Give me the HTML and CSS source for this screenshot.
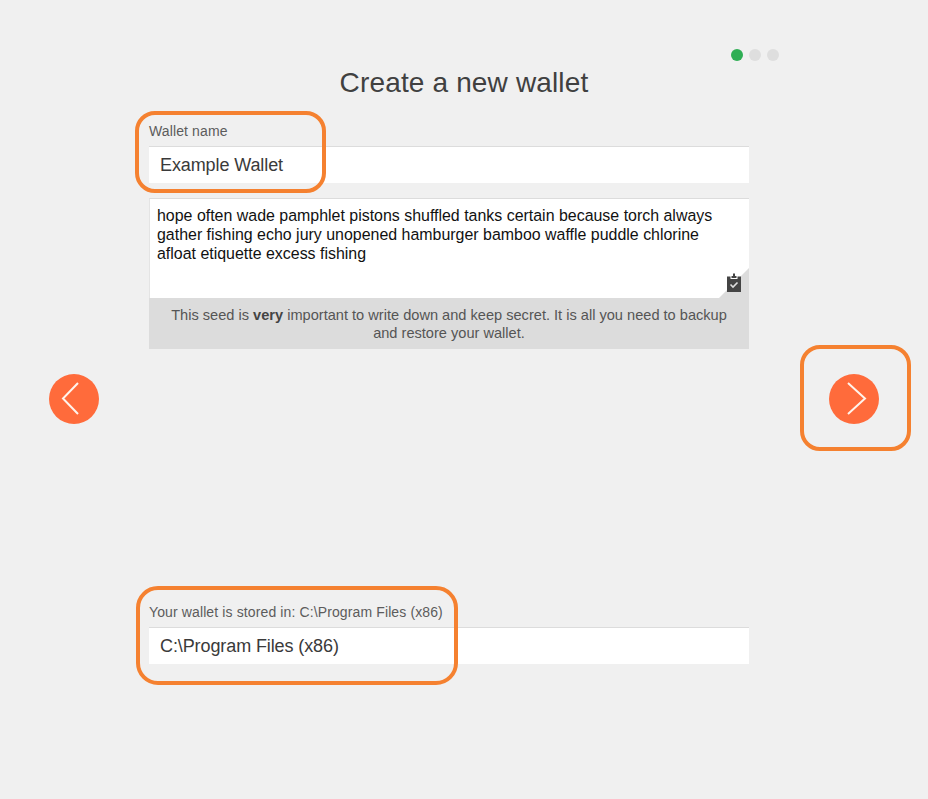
FILE: index.html
```html
<!DOCTYPE html>
<html lang="en">
<head>
<meta charset="utf-8">
<title>Create a new wallet</title>
<link rel="stylesheet" href="styles.css">
</head>
<body>
<main class="page">
  <div class="dots">
    <span class="dot dot-active"></span>
    <span class="dot"></span>
    <span class="dot"></span>
  </div>
  <h1 class="title">Create a new wallet</h1>
  <div class="form">
    <section class="field">
      <label class="label">Wallet name</label>
      <div class="input">Example Wallet</div>
    </section>
    <section class="seed">
      <div class="seed-box">
        <p class="seed-text">hope often wade pamphlet pistons shuffled tanks certain because torch always gather fishing echo jury unopened hamburger bamboo waffle puddle chlorine afloat etiquette excess fishing</p>
        <span class="fold"></span>
        <svg class="clip" width="14" height="19" viewBox="0 0 14 19" aria-hidden="true">
          <path fill="#444" d="M0 3.500h3.500V6h7V3.500H14V19H0zM4.500 3h1.500V0.500h2V3h1.500v2h-5z"/>
          <path fill="none" stroke="#dedede" stroke-width="1.600" d="M3.500 11.500l2.500 2.500 4.500-4.500"/>
        </svg>
      </div>
      <p class="notice">This seed is <strong>very</strong> important to write down and keep secret. It is all you need to backup and restore your wallet.</p>
    </section>
    <section class="field field-path">
      <label class="label">Your wallet is stored in: C:\Program Files (x86)</label>
      <div class="input">C:\Program Files (x86)</div>
    </section>
  </div>

  <button class="nav nav-prev" aria-label="Back">
    <svg width="50" height="50" viewBox="0 0 50 50"><path d="M29 9L14 24.500 29 40" fill="none" stroke="#fff4ec" stroke-width="2"/></svg>
  </button>
  <button class="nav nav-next" aria-label="Next">
    <svg width="50" height="50" viewBox="0 0 50 50"><path d="M19 9L36 24.500 19 40" fill="none" stroke="#fff4ec" stroke-width="2"/></svg>
  </button>

  <span class="mark mark-name"></span>
  <span class="mark mark-next"></span>
  <span class="mark mark-path"></span>
</main>
</body>
</html>
```

FILE: styles.css
```css
* {
  box-sizing: border-box;
}

html,
body {
  margin: 0;
  height: 100%;
}

body {
  background: #f0f0f0;
  font-family: "Liberation Sans", Arial, sans-serif;
  overflow: hidden;
}

.page {
  position: relative;
  height: 799px;
  padding-top: 49px;
}

.dots {
  display: flex;
  justify-content: flex-end;
  gap: 6px;
  height: 12px;
  padding-right: 149px;
}

.dot {
  width: 12px;
  height: 12px;
  border-radius: 50%;
  background: #dedede;
}

.dot-active {
  background: #2fae54;
}

.title {
  margin: 5px 0 0;
  height: 33px;
  font-size: 28px;
  line-height: 34px;
  font-weight: 400;
  letter-spacing: 0.15px;
  text-align: center;
  color: #404040;
}

.form {
  width: 600px;
  margin: 25px 0 0 149px;
}

.label {
  display: block;
  height: 22px;
  font-size: 14px;
  line-height: 15px;
  letter-spacing: 0.12px;
  color: #5c5c5c;
}

.input {
  height: 37px;
  padding-left: 11px;
  background: #fff;
  border-top: 1px solid #dcdcdc;
  font-size: 18px;
  line-height: 36px;
  letter-spacing: -0.1px;
  color: #3a3a3a;
}

.seed {
  margin-top: 15px;
}

.seed-box {
  position: relative;
  height: 100px;
  padding: 7px 30px 7px 7px;
  background: #fff;
  border-top: 1px solid #dcdcdc;
  border-left: 1px solid #e4e4e4;
}

.seed-text {
  margin: 0;
  font-size: 15.95px;
  line-height: 19px;
  color: #111;
}

.fold {
  position: absolute;
  right: 0;
  bottom: 0;
  border-style: solid;
  border-width: 0 0 30px 30px;
  border-color: transparent transparent #dcdcdc transparent;
}

.clip {
  position: absolute;
  right: 8px;
  bottom: 6px;
}

.notice {
  height: 51px;
  margin: 0;
  padding: 8px 10px 0;
  background: #dcdcdc;
  font-size: 14.6px;
  line-height: 18px;
  text-align: center;
  color: #555;
}

.notice strong {
  color: #444;
}

.field-path {
  margin-top: 256px;
}

.nav {
  position: absolute;
  top: 374px;
  width: 50px;
  height: 50px;
  padding: 0;
  border: 0;
  border-radius: 50%;
  background: #ff6b3b;
}

.nav svg {
  display: block;
}

.nav-prev {
  left: 49px;
}

.nav-next {
  left: 829px;
}

.mark {
  position: absolute;
  border: 4px solid #f58130;
}

.mark-name {
  left: 135px;
  top: 111px;
  width: 191px;
  height: 82px;
  border-radius: 20px;
}

.mark-next {
  left: 800px;
  top: 345px;
  width: 111px;
  height: 106px;
  border-radius: 20px;
}

.mark-path {
  left: 136px;
  top: 586px;
  width: 322px;
  height: 99px;
  border-radius: 22px;
}
```
